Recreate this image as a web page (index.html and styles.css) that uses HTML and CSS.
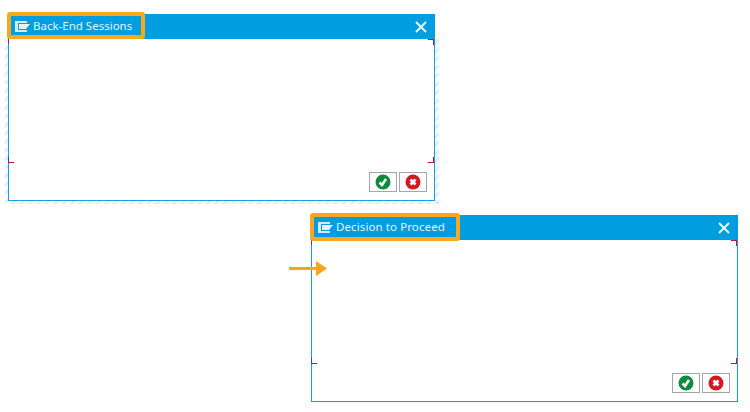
FILE: index.html
```html
<!DOCTYPE html>
<html lang="en">
<head>
    <meta charset="UTF-8">
    <title>Dialog Titles</title>
    <link rel="stylesheet" href="styles.css">
</head>
<body>

<!-- Back-End Sessions dialog -->
<div class="dialog dialog-first">
    <div class="title-bar">
        <div class="title-mark">
            <svg class="title-icon" width="15" height="11" viewBox="0 0 15 11">
                <path d="M0 0H12V2H3V9H12V11H0Z" fill="#d4ecf8"/>
                <path d="M4 3H15L11 8H4Z" fill="#e9eef1"/>
            </svg>
            <span class="title-text">Back-End Sessions</span>
        </div>
        <span class="close-btn">
            <svg width="12" height="12" viewBox="0 0 12 12"><path d="M1 1L11 11M11 1L1 11" stroke="#e8f5fc" stroke-width="2"/></svg>
        </span>
    </div>
    <div class="dialog-body">
        <i class="corner top-left"></i>
        <i class="corner top-right"></i>
        <i class="corner bottom-left"></i>
        <i class="corner bottom-right"></i>
        <div class="actions">
            <button class="action-btn" type="button">
                <svg width="18" height="18" viewBox="0 0 18 18"><circle cx="9" cy="9" r="7.5" fill="#0e8a3e"/><path d="M5.500 9.500L8 12L12 6" fill="none" stroke="#fff" stroke-width="2.600"/></svg>
            </button>
            <button class="action-btn" type="button">
                <svg width="18" height="18" viewBox="0 0 18 18"><circle cx="9" cy="9" r="7.5" fill="#d3181f"/><path d="M6.500 6.500L11.500 11.500M11.500 6.500L6.500 11.500" fill="none" stroke="#fff" stroke-width="2.800"/></svg>
            </button>
        </div>
    </div>
</div>

<!-- Decision to Proceed dialog -->
<div class="dialog dialog-second">
    <div class="title-bar">
        <div class="title-mark">
            <svg class="title-icon" width="15" height="11" viewBox="0 0 15 11">
                <path d="M0 0H12V2H3V9H12V11H0Z" fill="#d4ecf8"/>
                <path d="M4 3H15L11 8H4Z" fill="#e9eef1"/>
            </svg>
            <span class="title-text">Decision to Proceed</span>
        </div>
        <span class="close-btn">
            <svg width="12" height="12" viewBox="0 0 12 12"><path d="M1 1L11 11M11 1L1 11" stroke="#e8f5fc" stroke-width="2"/></svg>
        </span>
    </div>
    <div class="dialog-body">
        <i class="corner top-left"></i>
        <i class="corner top-right"></i>
        <i class="corner bottom-left"></i>
        <i class="corner bottom-right"></i>
        <div class="actions">
            <button class="action-btn" type="button">
                <svg width="18" height="18" viewBox="0 0 18 18"><circle cx="9" cy="9" r="7.5" fill="#0e8a3e"/><path d="M5.500 9.500L8 12L12 6" fill="none" stroke="#fff" stroke-width="2.600"/></svg>
            </button>
            <button class="action-btn" type="button">
                <svg width="18" height="18" viewBox="0 0 18 18"><circle cx="9" cy="9" r="7.5" fill="#d3181f"/><path d="M6.500 6.500L11.500 11.500M11.500 6.500L6.500 11.500" fill="none" stroke="#fff" stroke-width="2.800"/></svg>
            </button>
        </div>
    </div>
</div>

<!-- Arrow pointing at the second dialog -->
<svg class="arrow" width="38" height="15" viewBox="0 0 38 15">
    <path d="M0 7.500H28" stroke="#f9a51a" stroke-width="3"/>
    <path d="M27 0L38 7.500L27 15Z" fill="#f9a51a"/>
</svg>

</body>
</html>
```

FILE: styles.css
```css
body {
    margin: 0;
    height: 412px;
    position: relative;
    overflow: hidden;
    background-color: #fff;
    font-family: 'Noto Sans', sans-serif;
}

/* windows sit on a free canvas */
.dialog {
    position: absolute;
    width: 427px;
    height: 187px;
    display: flex;
    flex-direction: column;
    box-sizing: border-box;
}

.dialog-first {
    left: 8px;
    top: 14px;
}

/* hatched edge around the first window */
.dialog-first::before {
    content: "";
    position: absolute;
    left: -3px;
    top: 25px;
    right: -4px;
    bottom: -3px;
    background: repeating-linear-gradient(135deg, #dceffa 0 3px, #fff 3px 6px);
}

.dialog-second {
    left: 311px;
    top: 215px;
}

.title-bar {
    position: relative;
    height: 25px;
    flex: none;
    display: flex;
    align-items: center;
    justify-content: space-between;
    background-color: #009de0;
}

.title-mark {
    position: relative;
    display: flex;
    align-items: center;
    gap: 3px;
    height: 100%;
    padding: 0 13px 0 7px;
}

/* orange highlight laid over the title */
.title-mark::after {
    content: "";
    position: absolute;
    z-index: 1;
    left: -1px;
    top: -2px;
    right: 0;
    bottom: 0;
    border: 4px solid #fba61f;
    border-radius: 3px;
}

.dialog-second .title-mark {
    padding-right: 15px;
}

.dialog-second .title-mark::after {
    bottom: -1px;
}

.title-text {
    margin-bottom: 2px;
    color: #e6f4fb;
    font-size: 11.5px;
    line-height: 23px;
}

.dialog-second .title-text {
    letter-spacing: 0.1px;
}

.close-btn {
    display: flex;
    margin-right: 8px;
}

.dialog-body {
    flex: 1;
    position: relative;
    display: flex;
    justify-content: flex-end;
    align-items: flex-end;
    padding: 0 7px 8px 0;
    border: 1px solid #14a0dc;
    border-top: none;
    background-color: #fff;
}

.corner {
    position: absolute;
    width: 5px;
    height: 5px;
    border: 0 solid #d0112b;
}

.top-left {
    left: -1px;
    top: 0;
    border-left-width: 1px;
    border-color: #5b3a78;
}

.top-right {
    right: 0;
    top: 0;
    border-top-width: 1px;
    border-right-width: 1px;
}

.bottom-left {
    left: -1px;
    bottom: 37px;
    border-bottom-width: 1px;
    border-left-width: 1px;
    border-left-color: #5b3a78;
}

.bottom-right {
    right: 0;
    bottom: 37px;
    border-bottom-width: 1px;
    border-right-width: 1px;
}

.actions {
    display: flex;
    gap: 2px;
}

.action-btn {
    width: 28px;
    height: 20px;
    padding: 0;
    display: flex;
    align-items: center;
    justify-content: center;
    background-color: #fff;
    border: 1px solid #a6a6a6;
}

.arrow {
    position: absolute;
    left: 289px;
    top: 261px;
}
```
